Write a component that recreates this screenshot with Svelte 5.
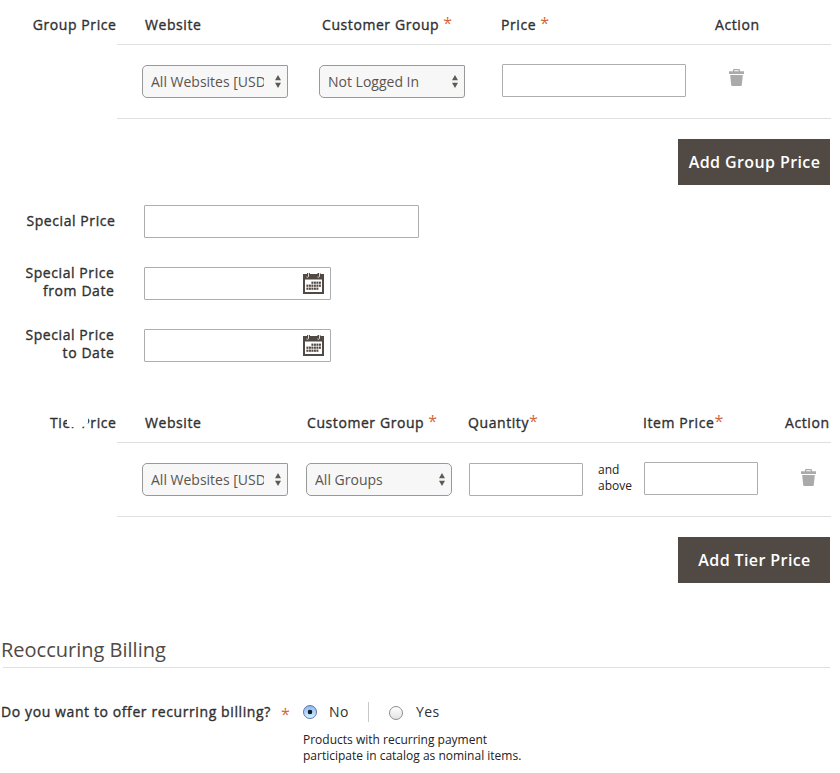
<script>
  const groupHeads = [
    { label: 'Website', width: 177 },
    { label: 'Customer Group', width: 179, required: true, gap: true },
    { label: 'Price', width: 214, required: true, gap: true },
    { label: 'Action', width: 116 }
  ];
  const tierHeads = [
    { label: 'Website', width: 162 },
    { label: 'Customer Group', width: 161, required: true, gap: true },
    { label: 'Quantity', width: 175, required: true },
    { label: 'Item Price', width: 142, required: true },
    { label: 'Action', width: 46 }
  ];
  const dates = ['from Date', 'to Date'];
  const days = [
    [2, 3, 4, 5],
    [0, 1, 2, 3, 4, 5],
    [0, 1, 2, 3, 4]
  ];
</script>

{#snippet head(items)}
  <div class="head">
    {#each items as h}
      <div class="cell" style="width: {h.width}px">
        <span>{h.label}</span>{#if h.required}<span class="star" class:gap={h.gap}>*</span>{/if}
      </div>
    {/each}
  </div>
{/snippet}

{#snippet picker(text, square)}
  <div class="select" class:square>
    <span class="value">{text}</span>
    <svg width="8" height="13" viewBox="0 0 8 13"><path d="M4 0 7 5.3H1zM4 13 1 7.7H7z" fill="#625a52" /></svg>
  </div>
{/snippet}

{#snippet trash()}
  <svg width="15" height="17" viewBox="0 0 15 17" fill="#aaa">
    <path d="M0 5V2.2h4V1.1Q4 0 5.2 0h4.6Q11 0 11 1.1v1.1h4V5zM5.3 2.2h4.4V1.2H5.3z" fill-rule="evenodd" />
    <path d="M1.2 6h12.6l-1 10q-.1 1-1 1H3.2q-.9 0-1-1z" />
  </svg>
{/snippet}

<main>
  <section class="prices">
    <div class="label first"><span>Group Price</span></div>
    <div class="table">
      {@render head(groupHeads)}
      <div class="row group">
        {@render picker('All Websites [USD', true)}
        {@render picker('Not Logged In', true)}
        <div class="input price"></div>
        <div class="bin">{@render trash()}</div>
      </div>
      <button>Add Group Price</button>
    </div>
  </section>

  <section class="special">
    <div class="field">
      <div class="label one"><span>Special Price</span></div>
      <div class="input wide"></div>
    </div>
    {#each dates as d}
      <div class="field">
        <div class="label two"><span>Special Price</span><span>{d}</span></div>
        <div class="input date">
          <svg width="21" height="21" viewBox="0 0 21 21" fill="#514943">
            <path d="M0 1H21V21H0zM2 6.5V19H19V6.5z" fill-rule="evenodd" />
            <path d="M4 0h3v4H4zM14.5 0h3v4h-3z" />
            <path d="M5.5 0v3.7q-.8 1-2 .2M16.5 0v3.7q-.8 1-2 .2" fill="none" stroke="#ddd" stroke-width="1" />
            {#each days as cols, r}
              {#each cols as c}
                <rect x={3.4 + c * 2.5} y={8.6 + r * 3} width="2" height="2.2" />
              {/each}
            {/each}
          </svg>
        </div>
      </div>
    {/each}
  </section>

  <section class="prices tiers">
    <div class="label first"><span class="worn">Tier Price</span></div>
    <div class="table">
      {@render head(tierHeads)}
      <div class="row tier">
        {@render picker('All Websites [USD', true)}
        {@render picker('All Groups', false)}
        <div class="input qty"></div>
        <div class="above">and<br />above</div>
        <div class="input item"></div>
        <div class="bin">{@render trash()}</div>
      </div>
      <button>Add Tier Price</button>
    </div>
  </section>

  <h2>Reoccuring Billing</h2>
  <section class="billing">
    <div class="question">Do you want to offer recurring billing?</div>
    <span class="star low">*</span>
    <div class="answers">
      <div class="options">
        <i class="radio on"></i><span>No</span>
        <i class="bar"></i>
        <i class="radio off"></i><span class="yes">Yes</span>
      </div>
      <p>Products with recurring payment<br />participate in catalog as nominal items.</p>
    </div>
  </section>
</main>

<style>
  :global(body) { background: #fff; }
  main {
    width: 840px;
    height: 773px;
    overflow: hidden;
    background: #fff;
    color: #303030;
    font: 400 14px/18px "Open Sans", "Noto Sans", sans-serif;
    letter-spacing: 0.58px;
    box-sizing: border-box;
  }
  main :global(*) { box-sizing: border-box; }
  svg { display: block; flex: none; }
  .label, .head, .question { -webkit-text-stroke: 0.35px #303030; }
  .question { letter-spacing: 0.6px; }
  .prices { display: flex; height: 205px; }
  .tiers { margin-top: 36px; }
  .label { text-align: right; white-space: nowrap; flex: none; }
  .first { width: 117px; padding: 16px 0.5px 0 0; }
  .table { width: 714px; display: flex; flex-direction: column; }
  .head { display: flex; height: 45px; padding: 16px 0 0 28px; border-bottom: 1px solid #dfdfdf; white-space: nowrap; }
  .cell { flex: none; display: flex; }
  .star { color: #d4683a; font-size: 16px; letter-spacing: 0; line-height: 14px; -webkit-text-stroke: 0; }
  .gap { margin-left: 4px; }
  .row { display: flex; height: 74px; border-bottom: 1px solid #dfdfdf; padding-left: 25px; align-items: flex-start; }
  .select {
    display: flex; align-items: center; justify-content: space-between; flex: none;
    width: 146px; height: 33px; margin-top: 20px; padding: 0 5px 0 8px;
    border: 1px solid #999; border-radius: 5px; background: #f7f7f7;
    color: #5b5550; letter-spacing: 0;
  }
  .square { border-top-right-radius: 1px; border-bottom-right-radius: 3px; }
  .value { width: 113px; overflow: hidden; white-space: nowrap; }
  .input { flex: none; height: 33px; border: 1px solid #adadad; background: #fff; border-radius: 1px; }
  .group .select + :global(.select) { margin-left: 31px; }
  .tier .select + :global(.select) { margin-left: 18px; }
  .price { width: 184px; margin: 19px 0 0 37px; }
  .bin { margin: 24px 0 0 43px; }
  .tier .bin { margin-top: 26px; }
  .qty { width: 114px; margin: 20px 0 0 17px; }
  .item { width: 114px; margin: 19px 0 0 12px; }
  .above { width: 34px; margin: 19px 0 0 15px; font-size: 12px; line-height: 16px; letter-spacing: 0; color: #222; }
  button {
    align-self: flex-end; width: 152px; height: 46px; margin: 20px 1px 0 0; padding: 0 0 0 1px; border: 0;
    background: #514943; color: #fff; font: 600 16px/46px "Open Sans", "Noto Sans", sans-serif; letter-spacing: 0.4px;
    white-space: nowrap;
  }
  .special { display: flex; flex-direction: column; gap: 29px; }
  .field { display: flex; height: 33px; align-items: center; }
  .one { width: 115.5px; padding-bottom: 2px; }
  .two { width: 114.5px; padding-bottom: 4px; display: flex; flex-direction: column; align-items: flex-end; }
  .field .input { margin-left: 28.5px; }
  .field .date { margin-left: 29.5px; }
  .wide { width: 275px; }
  .date { width: 187px; display: flex; align-items: center; justify-content: flex-end; padding-right: 6px; }
  .worn { position: relative; }
  .worn::after {
    content: ""; position: absolute; left: 17px; top: -2px; width: 21px; height: 16px;
    background: #fff; border-radius: 45% 20% 30% 20%;
  }
  h2 {
    margin: 35px 0 0 3px; height: 30px; border-bottom: 1px solid #dfdfdf; text-indent: -2px;
    width: 827px; font-size: 20px; line-height: 24px; font-weight: 400; letter-spacing: 0; color: #504a45;
  }
  .billing { display: flex; padding-top: 34px; white-space: nowrap; }
  .question { width: 281px; padding: 1px 0 0 1px; }
  .low { width: 21px; padding-top: 5px; }
  .answers { margin-left: 1px; }
  .options { display: flex; height: 20px; align-items: center; }
  .options span { margin-left: 12px; width: 39px; letter-spacing: 0.4px; }
  .options .yes { margin-left: 13px; }
  .radio { width: 14px; height: 14px; border-radius: 50%; flex: none; }
  .on { border: 1px solid #5873ac; background: radial-gradient(circle, #102030 0 2px, transparent 2.6px), linear-gradient(#8fb8ea, #d4f2ff); }
  .off { border: 1px solid #8d8d8d; background: linear-gradient(#fff, #e3e3e3); margin-top: 2px; }
  .bar { width: 1px; height: 20px; background: #c8c8c8; margin-right: 20px; }
  p { margin: 10px 0 0; font-size: 12px; line-height: 16px; letter-spacing: 0; color: #222; }
</style>
